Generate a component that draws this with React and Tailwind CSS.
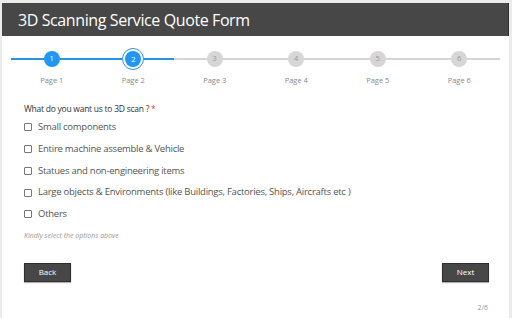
import React from "react";

const pages = [1, 2, 3, 4, 5, 6];
const options = [
  "Small components",
  "Entire machine assemble & Vehicle",
  "Statues and non-engineering items",
  "Large objects & Environments (like Buildings, Factories, Ships, Aircrafts etc )",
  "Others",
];

function Step({ n }) {
  const done = n <= 2;
  const lineL = n <= 2 ? "bg-[#2a93e8]" : "bg-[#d5d5d5]";
  const lineR = n <= 2 ? "bg-[#2a93e8]" : "bg-[#d5d5d5]";
  return (
    <div className="flex flex-col items-center">
      <div className="flex items-center w-full h-[24px]">
        <div className={`flex-1 h-[2px] ${lineL}`} />
        {n === 2 ? (
          <div className="w-[22px] h-[22px] rounded-full border-[1.5px] border-[#2a93e8] flex items-center justify-center bg-white">
            <div className="w-[16px] h-[16px] rounded-full bg-[#2196f3] flex items-center justify-center text-white text-[8px] leading-none">
              {n}
            </div>
          </div>
        ) : (
          <div
            className={`w-[16px] h-[16px] rounded-full flex items-center justify-center text-[7.5px] leading-none ${
              done ? "bg-[#2196f3] text-white" : "bg-[#d6d6d6] text-[#9a9a9a]"
            }`}
          >
            {n}
          </div>
        )}
        <div className={`flex-1 h-[2px] ${lineR}`} />
      </div>
      <div className="mt-[6px] text-[7.5px] text-[#8a8a8a] leading-none">Page {n}</div>
    </div>
  );
}

export default function App() {
  return (
    <div
      className="w-[512px] h-[318px] bg-[#ebebeb] pt-[3px] pl-[2px] pr-[3px] overflow-hidden"
      style={{ fontFamily: '"Open Sans", sans-serif' }}
    >
      <div className="h-full bg-white flex flex-col">
        <div className="h-[33px] bg-[#474747] flex items-center pl-[16px] border-r border-[#2f2f2f]">
          <span className="text-white text-[16px] tracking-[-0.4px] leading-none">3D Scanning Service Quote Form</span>
        </div>
        <div className="ml-[9px] w-[489px] grid grid-cols-6 mt-[11px]">
          {pages.map((n) => (
            <Step key={n} n={n} />
          ))}
        </div>
        <div className="pl-[22px] mt-[20px]">
          <div className="text-[8.5px] tracking-[-0.25px] text-[#333] leading-none">
            What do you want us to 3D scan ? <span className="text-[#e53935]">*</span>
          </div>
          <div className="mt-[8px] flex flex-col gap-[9.3px]">
            {options.map((o) => (
              <label key={o} className="flex items-center gap-[6px] text-[9.5px] tracking-[-0.25px] text-[#555] leading-[12.5px]">
                <span className="w-[8px] h-[8px] border border-[#777] rounded-[1px] bg-white" />
                {o}
              </label>
            ))}
          </div>
          <div className="mt-[11px] text-[7px] italic text-[#999] leading-none">Kindly select the options above</div>
        </div>
        <div className="flex justify-between pl-[22px] pr-[20px] mt-[24px]">
          <button className="w-[47px] h-[19px] bg-[#474747] text-white text-[8px] border border-[#2e2e2e] shadow-[0_1px_1px_rgba(0,0,0,0.3)]">
            Back
          </button>
          <button className="w-[47px] h-[19px] bg-[#474747] text-white text-[8px] border border-[#2e2e2e] shadow-[0_1px_1px_rgba(0,0,0,0.3)]">
            Next
          </button>
        </div>
        <div className="flex justify-end pr-[21px] mt-[22px] text-[7px] text-[#999] leading-none">2/6</div>
      </div>
    </div>
  );
}
